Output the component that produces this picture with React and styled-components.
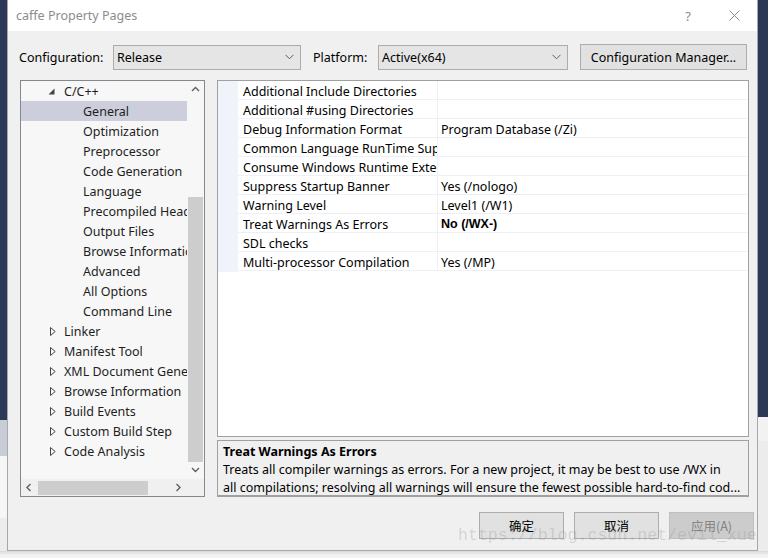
import React from 'react';
import styled, { createGlobalStyle } from 'styled-components';

const Global = createGlobalStyle`
  html, body { margin: 0; padding: 0; }
  body {
    width: 768px; height: 558px; overflow: hidden;
    background: #2b3956;
    font-family: "Noto Sans", "Noto Sans CJK SC", sans-serif;
    font-size: 12.5px;
    color: #000;
  }
`;

const Desktop = styled.div`
  position: relative;
  width: 768px;
  height: 558px;
  display: grid;
  grid-template-columns: 7px 751px 10px;
  grid-template-rows: 551px 7px;
  background: #ececec;
  overflow: hidden;
`;

const SideStrip = styled.div`
  grid-row: 1;
  display: flex;
  flex-direction: column;
  overflow: hidden;
`;

const StripBlock = styled.div`
  height: ${p => p.$h}px;
  flex: ${p => (p.$grow ? 1 : 'none')};
  background: ${p => p.$bg};
`;

const BottomShade = styled.div`
  grid-column: 1 / span 3;
  grid-row: 2;
  background: linear-gradient(#d8d8d8, #f2f2f2 4px);
`;

const Window = styled.div`
  grid-column: 2;
  grid-row: 1;
  position: relative;
  background: #f0f0f0;
  border: 1px solid #a8a8a8;
  border-top: none;
  display: flex;
  flex-direction: column;
`;

const TitleBar = styled.div`
  height: 31px;
  background: #fff;
  display: flex;
  align-items: center;
  padding-left: 8px;
`;

const Title = styled.div`
  flex: 1;
  color: #8c8c8c;
  font-size: 12.5px;
`;

const CaptionButton = styled.div`
  width: 46px;
  height: 31px;
  display: flex;
  align-items: center;
  justify-content: center;
  color: #8a8a8a;
  font-size: 13px;
`;

const ConfigRow = styled.div`
  display: flex;
  align-items: center;
  margin-top: 13px;
  padding-left: 11px;
  height: 26px;
`;

const FieldLabel = styled.div`
  width: ${p => p.$w}px;
  white-space: nowrap;
`;

const Select = styled.div`
  width: ${p => p.$w}px;
  height: 25px;
  box-sizing: border-box;
  border: 1px solid #acacac;
  background: #e5e5e5;
  display: flex;
  align-items: center;
  padding: 0 6px 0 3px;
  margin-right: 12px;
`;

const SelectText = styled.div`
  flex: 1;
`;

const Button = styled.div`
  width: ${p => p.$w}px;
  height: ${p => p.$h}px;
  box-sizing: border-box;
  border: 1px solid ${p => (p.$disabled ? '#bfbfbf' : '#adadad')};
  background: ${p => (p.$disabled ? '#cccccc' : '#e1e1e1')};
  color: ${p => (p.$disabled ? '#838383' : '#000')};
  display: flex;
  align-items: center;
  justify-content: center;
  font-family: ${p => (p.$cjk ? '"Noto Sans CJK SC", "Noto Sans", sans-serif' : 'inherit')};
  font-size: 12.5px;
`;

const Main = styled.div`
  display: flex;
  margin-top: 10px;
  padding-left: 12px;
  height: 417px;
  gap: 12px;
`;

const Tree = styled.div`
  width: 185px;
  height: 417px;
  box-sizing: border-box;
  border: 1px solid #828790;
  background: #f7f7f7;
  display: grid;
  grid-template-columns: 1fr 17px;
  grid-template-rows: 1fr 17px;
`;

const TreeContent = styled.div`
  overflow: hidden;
  display: flex;
  flex-direction: column;
`;

const TreeRow = styled.div`
  height: 20px;
  flex: none;
  display: flex;
  align-items: center;
  padding-left: ${p => p.$indent}px;
  background: ${p => (p.$selected ? '#cccedb' : 'transparent')};
  white-space: nowrap;
  color: #1e1e1e;
`;

const Expander = styled.div`
  width: 18px;
  height: 20px;
  flex: none;
  display: flex;
  align-items: center;
  padding-left: ${p => (p.$open ? 2 : 4)}px;
  box-sizing: border-box;
`;

const VScroll = styled.div`
  display: flex;
  flex-direction: column;
  background: #f7f7f7;
`;

const HScroll = styled.div`
  display: flex;
  background: #f0f0f0;
`;

const ArrowBox = styled.div`
  width: 17px;
  height: 17px;
  flex: none;
  display: flex;
  align-items: center;
  justify-content: center;
`;

const VTrack = styled.div`
  flex: 1;
  display: flex;
  flex-direction: column;
  justify-content: flex-end;
  align-items: center;
`;

const VThumb = styled.div`
  width: 15px;
  height: 265px;
  background: #cdcdcd;
`;

const HTrack = styled.div`
  flex: 1;
  display: flex;
  align-items: center;
`;

const HThumb = styled.div`
  width: 110px;
  height: 14px;
  background: #cdcdcd;
`;

const Corner = styled.div`
  background: #f0f0f0;
`;

const RightColumn = styled.div`
  width: 532px;
  display: flex;
  flex-direction: column;
  gap: 3px;
`;

const Grid = styled.div`
  height: 358px;
  box-sizing: border-box;
  border: 1px solid #a0a0a0;
  background: #fff;
  display: flex;
  flex-direction: column;
`;

const GridRow = styled.div`
  height: 19px;
  flex: none;
  display: grid;
  grid-template-columns: 20px 200px 1fr;
`;

const Margin = styled.div`
  background: #f0f3f9;
`;

const Cell = styled.div`
  box-sizing: border-box;
  height: 19px;
  border-bottom: 1px solid #edf1f7;
  border-right: ${p => (p.$name ? '1px solid #edf1f7' : 'none')};
  padding: 3px 0 0 ${p => (p.$name ? 5 : 3)}px;
  line-height: 15px;
  white-space: nowrap;
  overflow: hidden;
  font-weight: ${p => (p.$bold ? 700 : 400)};
  font-family: ${p => (p.$bold ? '"Liberation Sans", "Noto Sans", sans-serif' : 'inherit')};
`;

const GridFill = styled.div`
  flex: 1;
  display: flex;
`;

const MarginFill = styled.div`
  width: 20px;
  background: #f0f3f9;
  height: 1px;
`;

const Description = styled.div`
  height: 57px;
  box-sizing: border-box;
  border: 1px solid #a0a0a0;
  border-bottom: 2px solid #a0a0a0;
  background: #f0f0f0;
  padding: 2px 0 0 5px;
  line-height: 18px;
  white-space: nowrap;
  overflow: hidden;
`;

const DescTitle = styled.div`
  font-weight: 700;
`;

const Footer = styled.div`
  display: flex;
  justify-content: flex-end;
  gap: 10px;
  margin-top: 15px;
  padding-right: 3px;
`;

const Watermark = styled.div`
  position: absolute;
  left: 450px;
  top: 526px;
  font-family: "Liberation Mono", monospace;
  font-size: 16.6px;
  line-height: 20px;
  color: rgba(150, 150, 150, 0.32);
  white-space: nowrap;
  pointer-events: none;
`;

const Chevron = ({ dir, color = '#606060' }) => {
  const paths = {
    down: 'M1 2 L4.5 5.5 L8 2',
    up: 'M1 6 L4.5 2.5 L8 6',
    left: 'M5.5 1 L2 4.5 L5.5 8',
    right: 'M2.5 1 L6 4.5 L2.5 8',
  };
  return (
    <svg width="9" height="9" viewBox="0 0 9 9">
      <path d={paths[dir]} fill="none" stroke={color} strokeWidth="1.4" />
    </svg>
  );
};

const SmallDown = () => (
  <svg width="9" height="6" viewBox="0 0 9 6">
    <path d="M0.5 0.8 L4.5 4.8 L8.5 0.8" fill="none" stroke="#606060" strokeWidth="1" />
  </svg>
);

const OpenTri = () => (
  <svg width="7" height="7" viewBox="0 0 7 7">
    <polygon points="6.5,0.5 6.5,6.5 0.5,6.5" fill="#444" />
  </svg>
);

const ClosedTri = () => (
  <svg width="6" height="9" viewBox="0 0 6 9">
    <polygon points="0.5,0.5 5.2,4.5 0.5,8.5" fill="none" stroke="#444" strokeWidth="1" />
  </svg>
);

const CloseX = () => (
  <svg width="11" height="11" viewBox="0 0 11 11">
    <path d="M0.5 0.5 L10.5 10.5 M10.5 0.5 L0.5 10.5" stroke="#8a8a8a" strokeWidth="1" />
  </svg>
);

const children = [
  'General', 'Optimization', 'Preprocessor', 'Code Generation', 'Language',
  'Precompiled Headers', 'Output Files', 'Browse Information', 'Advanced',
  'All Options', 'Command Line',
];
const roots = [
  'Linker', 'Manifest Tool', 'XML Document Generator', 'Browse Information',
  'Build Events', 'Custom Build Step', 'Code Analysis',
];

const props = [
  ['Additional Include Directories', ''],
  ['Additional #using Directories', ''],
  ['Debug Information Format', 'Program Database (/Zi)'],
  ['Common Language RunTime Support', ''],
  ['Consume Windows Runtime Extension', ''],
  ['Suppress Startup Banner', 'Yes (/nologo)'],
  ['Warning Level', 'Level1 (/W1)'],
  ['Treat Warnings As Errors', 'No (/WX-)', true],
  ['SDL checks', ''],
  ['Multi-processor Compilation', 'Yes (/MP)'],
];

export default function App() {
  return (
    <Desktop>
      <Global />
      <SideStrip>
        <StripBlock $h={420} $bg="#2b3956" />
        <StripBlock $h={36} $bg="#c7ccd6" />
        <StripBlock $h={62} $bg="#f6f6f6" />
        <StripBlock $grow $bg="#ececec" />
      </SideStrip>
      <Window>
        <TitleBar>
          <Title>caffe Property Pages</Title>
          <CaptionButton>?</CaptionButton>
          <CaptionButton><CloseX /></CaptionButton>
        </TitleBar>
        <ConfigRow>
          <FieldLabel $w={94}>Configuration:</FieldLabel>
          <Select $w={188}>
            <SelectText>Release</SelectText>
            <SmallDown />
          </Select>
          <FieldLabel $w={65}>Platform:</FieldLabel>
          <Select $w={190}>
            <SelectText>Active(x64)</SelectText>
            <SmallDown />
          </Select>
          <Button $w={167} $h={26}>Configuration Manager...</Button>
        </ConfigRow>
        <Main>
          <Tree>
            <TreeContent>
              <TreeRow $indent={25}>
                <Expander $open><OpenTri /></Expander>
                C/C++
              </TreeRow>
              {children.map((c, i) => (
                <TreeRow key={c} $indent={62} $selected={i === 0}>{c}</TreeRow>
              ))}
              {roots.map(r => (
                <TreeRow key={r} $indent={25}>
                  <Expander><ClosedTri /></Expander>
                  {r}
                </TreeRow>
              ))}
            </TreeContent>
            <VScroll>
              <ArrowBox><Chevron dir="up" /></ArrowBox>
              <VTrack><VThumb /></VTrack>
              <ArrowBox><Chevron dir="down" /></ArrowBox>
            </VScroll>
            <HScroll>
              <ArrowBox><Chevron dir="left" /></ArrowBox>
              <HTrack><HThumb /></HTrack>
              <ArrowBox><Chevron dir="right" /></ArrowBox>
            </HScroll>
            <Corner />
          </Tree>
          <RightColumn>
            <Grid>
              {props.map(([n, v, b]) => (
                <GridRow key={n}>
                  <Margin />
                  <Cell $name>{n}</Cell>
                  <Cell $bold={b}>{v}</Cell>
                </GridRow>
              ))}
              <GridFill><MarginFill /></GridFill>
            </Grid>
            <Description>
              <DescTitle>Treat Warnings As Errors</DescTitle>
              <div>Treats all compiler warnings as errors. For a new project, it may be best to use /WX in</div>
              <div>all compilations; resolving all warnings will ensure the fewest possible hard-to-find cod...</div>
            </Description>
          </RightColumn>
        </Main>
        <Footer>
          <Button $w={85} $h={27} $cjk>确定</Button>
          <Button $w={85} $h={27} $cjk>取消</Button>
          <Button $w={85} $h={27} $cjk $disabled>应用(A)</Button>
        </Footer>
        <Watermark>https://blog.csdn.net/evil_xue</Watermark>
      </Window>
      <SideStrip>
        <StripBlock $h={417} $bg="#2b3956" />
        <StripBlock $h={24} $bg="#f2f2f2" />
        <StripBlock $grow $bg="#ececec" />
      </SideStrip>
      <BottomShade />
    </Desktop>
  );
}
